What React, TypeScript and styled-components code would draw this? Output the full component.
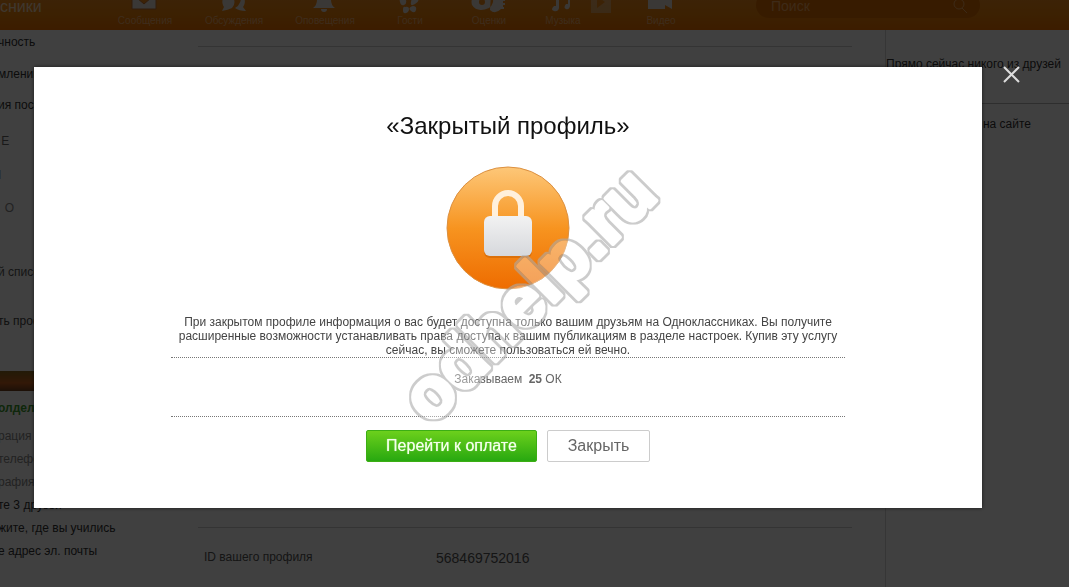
import React from 'react';
import styled, { createGlobalStyle } from 'styled-components';

const GlobalStyle = createGlobalStyle`
  * { box-sizing: border-box; }
  body {
    margin: 0;
    background: #fff;
    color: #333;
    font: 12px/14px "Liberation Sans", Arial, sans-serif;
    overflow: hidden;
  }
  h1, p, ul { margin: 0; padding: 0; }
`;

const Page = styled.div`
  height: 100vh;
  display: flex;
  flex-direction: column;
  overflow: hidden;
`;

const Header = styled.header`
  flex: none;
  height: 30px;
  display: flex;
  align-items: flex-end;
  overflow: hidden;
  background: linear-gradient(#f08a1c, #ee8208 50%, #f07000);
`;

const Logo = styled.a`
  width: 100px;
  height: 30px;
  color: #fff;
  font-size: 16px;
  line-height: 14px;
  text-decoration: none;
  opacity: 0.7;
`;

const Nav = styled.nav`
  display: flex;
  flex: 1;
`;

const NavItem = styled.a<{ $width: number }>`
  width: ${(p) => p.$width}px;
  height: 38px;
  display: flex;
  flex-direction: column;
  align-items: center;
  justify-content: space-between;
  padding-bottom: 3px;
  color: #f6b070;
  font-size: 10px;
  line-height: 12px;
  text-decoration: none;
  svg { display: block; fill: #e8e0d8; flex: none; }
`;

const Search = styled.label`
  flex: none;
  width: 224px;
  height: 26px;
  margin: 0 89px 12px 0;
  padding: 2px 12px 0 15px;
  display: flex;
  align-items: center;
  border-radius: 13px;
  background: #dc6c00;
  input {
    flex: 1;
    min-width: 0;
    padding: 0;
    border: 0;
    background: none;
    font: 14px/16px "Liberation Sans", Arial, sans-serif;
  }
  input::placeholder { color: #f4a860; opacity: 1; }
`;

const Columns = styled.div`
  flex: 1;
  display: grid;
  grid-template-columns: 198px 1fr 184px;
  column-gap: 33px;
  min-height: 0;
`;

const Sidebar = styled.aside`
  padding-top: 5px;
  overflow: hidden;
  white-space: pre;
`;

const SideList = styled.ul`
  margin-left: -2px;
  list-style: none;
`;

const SideItem = styled.li<{ $height: number; $tone?: string; $bold?: boolean }>`
  height: ${(p) => p.$height}px;
  color: ${(p) => p.$tone || '#333'};
  font-weight: ${(p) => (p.$bold ? 700 : 400)};
`;

const Promo = styled.div`
  width: 163px;
  height: 20px;
  margin-bottom: 10px;
  background: linear-gradient(#8a6a20, #c8601c 60%, #70401c);
`;

const Main = styled.main`
  margin-left: -33px;
  padding-top: 16px;
  display: flex;
  flex-direction: column;
`;

const Section = styled.section<{ $height: number }>`
  height: ${(p) => p.$height}px;
  border-top: 1px solid #d0d0d0;
`;

const DataRow = styled.dl`
  margin: 0;
  padding: 21px 6px 0;
  display: grid;
  grid-template-columns: 232px 1fr;
  color: #555;
  dt { font-size: 12px; line-height: 16px; }
  dd { margin: 0; font-size: 14px; line-height: 18px; }
`;

const Friends = styled.aside`
  border-left: 1px solid #d8d8d8;
  padding-top: 27px;
  white-space: nowrap;
`;

const FriendsNote = styled.p<{ $end?: boolean }>`
  padding-right: 38px;
  height: ${(p) => (p.$end ? 20 : 46)}px;
  text-align: ${(p) => (p.$end ? 'right' : 'left')};
`;

const FriendsRest = styled.div`
  padding-top: 13px;
  border-top: 1px solid #b8b8b8;
`;

const Overlay = styled.div`
  position: fixed;
  inset: 0;
  display: grid;
  grid-template-columns: minmax(0, 1fr) 87px;
  align-items: start;
  padding: 67px 0 0 34px;
  background: rgba(0, 0, 0, 0.75);
`;

const Dialog = styled.section`
  position: relative;
  display: flex;
  flex-direction: column;
  align-items: center;
  padding: 44px 20px 46px;
  background: #fff;
  box-shadow: 0 0 4px rgba(0, 0, 0, 0.6);
`;

const Title = styled.h1`
  color: #111;
  font-size: 24px;
  line-height: 30px;
  font-weight: 400;
`;

const LockBadge = styled.svg`
  display: block;
  width: 126px;
  height: 126px;
  margin: 24px 0;
`;

const Details = styled.div`
  width: 100%;
  max-width: 674px;
  text-align: center;
`;

const Description = styled.p`
  color: #444;
`;

const Order = styled.p`
  height: 60px;
  padding-top: 14px;
  border-top: 1px dotted #777;
  border-bottom: 1px dotted #777;
  color: #666;
  b { margin: 0 0 0 3px; }
`;

const Actions = styled.div`
  display: flex;
  gap: 10px;
  margin-top: 13px;
`;

const Button = styled.button<{ $primary?: boolean }>`
  width: ${(p) => (p.$primary ? 171 : 103)}px;
  height: 32px;
  padding: 0;
  border: 1px solid ${(p) => (p.$primary ? '#3cae14' : '#ccc')};
  border-radius: 2px;
  background: ${(p) => (p.$primary ? 'linear-gradient(#6cd01c, #28a810)' : '#fff')};
  color: ${(p) => (p.$primary ? '#f4ffec' : '#666')};
  font: 16px/20px "Liberation Sans", Arial, sans-serif;
  text-shadow: ${(p) => (p.$primary ? '0 0 1px #d8f8c0' : 'none')};
`;

const CloseButton = styled.button`
  justify-self: start;
  width: 20px;
  height: 20px;
  margin: -2px 0 0 20px;
  padding: 0;
  border: 0;
  background: none;
  svg { display: block; }
`;

const Watermark = styled.svg`
  position: absolute;
  top: 83px;
  left: 50%;
  width: 300px;
  height: 300px;
  margin-left: -124px;
  pointer-events: none;
  text {
    font: 700 71px "Liberation Sans", Arial, sans-serif;
    fill: #fff;
    stroke: #fff;
    stroke-width: 4px;
    stroke-linejoin: round;
  }
`;

const navItems = [
  { label: 'Сообщения', width: 90, icon: <path d="M0 0h24v17H0zM5 6l7 6 7-6" stroke="#c07030" strokeWidth="1" /> },
  {
    label: 'Обсуждения', width: 88,
    icon: <path d="M7 2a7 8 0 0 1 4 14q-4 2-10 3l2-4A7 8 0 0 1 7 2m12 0a7 8 0 0 1 3 13l3 4q-7 0-11-3a11 11 0 0 0 5-14" />,
  },
  { label: 'Оповещения', width: 94, icon: <path d="M12 0q7 0 7 8 0 5 4 8H1q4-3 4-8 0-8 7-8M9 17h6q0 3-3 3t-3-3" /> },
  {
    label: 'Гости', width: 76,
    icon: <path d="M4 6q4-2 5 2t-2 5-4-3 1-4m4 9q4-1 4 2t-3 4-3-3 2-3m7-10q4-2 6 1t-3 6-4-2 1-5m1 9q4 0 3 4t-5 1 2-5" />,
  },
  {
    label: 'Оценки', width: 82,
    icon: <path fillRule="evenodd" d="M5 0a9 9 0 0 1 8 16Q1 21-4 13A10 10 0 0 1 5 0m1 7a3 3 0 1 0 0 6 3 3 0 0 0 0-6m9-5h13v3h-1v2h2v2h-2v2h2v2h-2v2h1v2h-3q-6 6-11 1z" />,
  },
  { label: 'Музыка', width: 66, icon: <path d="M6 3l14-3v14q-1 4-4 3t0-5h2V6L9 8v8q-1 4-5 3t0-5h2z" /> },
  { label: '', width: 10, icon: <path fillRule="evenodd" d="M3 0h20v21H3zm6 4v12l8-6z" fillOpacity="0.4" /> },
  { label: 'Видео', width: 110, icon: <path d="M0 2h15q2 0 2 2v4l7-5v14l-7-4v4H0z" /> },
];

const sideItems = [
  { text: 'чность', height: 32 },
  { text: 'млений', height: 31 },
  { text: 'ия посещ', height: 36 },
  { text: ' Е', height: 34, tone: '#666' },
  { text: 'І', height: 33, tone: '#777' },
  { text: '  О', height: 64, tone: '#888' },
  { text: 'й список', height: 49, tone: '#555' },
  { text: 'ть профи', height: 57, tone: '#444' },
];

const taskItems = [
  { text: 'олдела', height: 28, tone: '#3c9a2c', bold: true },
  { text: 'рация', height: 23, tone: '#888' },
  { text: 'телефон', height: 23, tone: '#888' },
  { text: 'рафия', height: 23, tone: '#888' },
  { text: 'те 3 друзей', height: 23 },
  { text: 'жите, где вы учились', height: 23 },
  { text: 'е адрес эл. почты', height: 23 },
];

export default function App() {
  return (
    <>
      <GlobalStyle />
      <Page>
        <Header>
          <Logo href="#">сники</Logo>
          <Nav>
            {navItems.map((item) => (
              <NavItem key={item.width} href="#" $width={item.width} aria-label={item.label || 'Плеер'}>
                <svg width="26" height="21" viewBox="0 0 26 21" overflow="visible">{item.icon}</svg>
                {item.label}
              </NavItem>
            ))}
          </Nav>
          <Search>
            <input type="text" placeholder="Поиск" aria-label="Поиск" />
            <svg width="16" height="16" viewBox="0 0 16 16" fill="none" stroke="#f0a860" strokeWidth="1">
              <circle cx="7" cy="6" r="5" />
              <path d="M10 10l5 5" />
            </svg>
          </Search>
        </Header>
        <Columns>
          <Sidebar>
            <SideList>
              {sideItems.map((item) => (
                <SideItem key={item.text} $height={item.height} $tone={item.tone}>{item.text}</SideItem>
              ))}
            </SideList>
            <Promo />
            <SideList>
              {taskItems.map((item) => (
                <SideItem key={item.text} $height={item.height} $tone={item.tone} $bold={item.bold}>{item.text}</SideItem>
              ))}
            </SideList>
          </Sidebar>
          <Main>
            <Section $height={481} />
            <Section $height={60}>
              <DataRow>
                <dt>ID вашего профиля</dt>
                <dd>568469752016</dd>
              </DataRow>
            </Section>
          </Main>
          <Friends>
            <FriendsNote>Прямо сейчас никого из друзей</FriendsNote>
            <FriendsRest>
              <FriendsNote $end>на сайте</FriendsNote>
            </FriendsRest>
          </Friends>
        </Columns>
      </Page>
      <Overlay>
        <Dialog role="dialog" aria-labelledby="dialog-title">
          <Title id="dialog-title">«Закрытый профиль»</Title>
          <LockBadge viewBox="0 0 126 126" aria-hidden="true">
            <defs>
              <linearGradient id="disc" x1="0" y1="0" x2="0" y2="1">
                <stop offset="0" stopColor="#fdc778" />
                <stop offset="0.5" stopColor="#f79420" />
                <stop offset="1" stopColor="#ee6c00" />
              </linearGradient>
              <linearGradient id="body" x1="0" y1="0" x2="0" y2="1">
                <stop offset="0" stopColor="#f2f2f2" />
                <stop offset="1" stopColor="#d6d8dc" />
              </linearGradient>
            </defs>
            <circle cx="63" cy="63" r="61" fill="url(#disc)" stroke="#dc9040" />
            <path d="M50 54V41a13 13 0 0 1 26 0v13" fill="none" stroke="#fff0dc" strokeWidth="6" />
            <rect x="39" y="52" width="48" height="41" rx="6" fill="#b85800" opacity="0.4" />
            <rect x="39" y="51" width="48" height="40" rx="6" fill="url(#body)" />
          </LockBadge>
          <Details>
            <Description>
              При закрытом профиле информация о вас будет доступна только вашим друзьям на Одноклассниках. Вы получите
              расширенные возможности устанавливать права доступа к вашим публикациям в разделе настроек. Купив эту услугу
              сейчас, вы сможете пользоваться ей вечно.
            </Description>
            <Order>Заказываем <b>25</b> ОК</Order>
          </Details>
          <Actions>
            <Button type="button" $primary>Перейти к оплате</Button>
            <Button type="button">Закрыть</Button>
          </Actions>
          <Watermark viewBox="0 0 300 300" aria-hidden="true">
            <defs>
              <filter id="outline" x="0" y="0" width="300" height="300" filterUnits="userSpaceOnUse" colorInterpolationFilters="sRGB">
                <feMorphology in="SourceAlpha" operator="dilate" radius="2" result="grown" />
                <feComposite in="grown" in2="SourceAlpha" operator="out" result="ring" />
                <feFlood floodColor="#aaa" floodOpacity="0.6" />
                <feComposite in2="ring" operator="in" result="edge" />
                <feFlood floodColor="#fff" floodOpacity="0.35" />
                <feComposite in2="SourceAlpha" operator="in" result="face" />
                <feMerge>
                  <feMergeNode in="face" />
                  <feMergeNode in="edge" />
                </feMerge>
              </filter>
            </defs>
            <g filter="url(#outline)">
              <text transform="translate(47 276) rotate(-45)">odhelp.ru</text>
            </g>
          </Watermark>
        </Dialog>
        <CloseButton type="button" aria-label="Закрыть окно">
          <svg width="20" height="20" viewBox="0 0 20 20" stroke="#ddd" strokeWidth="2">
            <path d="M2 2l15 15M17 2L2 17" />
          </svg>
        </CloseButton>
      </Overlay>
    </>
  );
}
